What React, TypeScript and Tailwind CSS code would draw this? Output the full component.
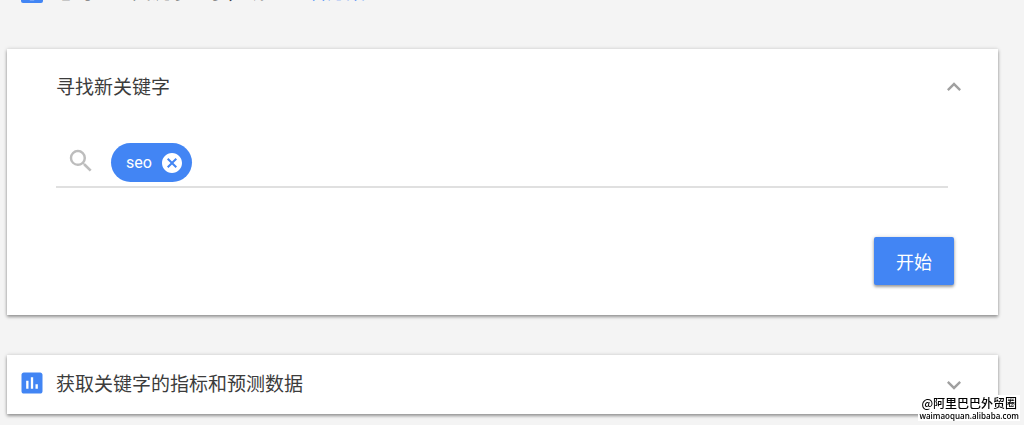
import { MdAssessment, MdCancel, MdKeyboardArrowDown, MdKeyboardArrowUp, MdLightbulb, MdSearch } from 'react-icons/md'

const shadow = 'shadow-[0_2px_3px_rgba(0,0,0,0.35),0_0_4px_rgba(0,0,0,0.15)]'

const PlanNotice = () => {
  return (
    <div className="-mt-[22px] mb-[43px] flex h-7 items-center pl-[11px]">
      <span className="flex size-7 items-center justify-center">
        <span className="flex size-[22px] items-center justify-center rounded-xs bg-[#4285f4] text-white">
          <MdLightbulb className="size-5" />
        </span>
      </span>
      <p className="ml-[10px] pb-px text-[19px]">
        您可以从关键字入手，或
        <a href="#plans" className="ml-6 text-[#4285f4]">
          查看方案
        </a>
      </p>
    </div>
  )
}

const FindKeywords = () => {
  return (
    <section className={`bg-white pr-11 pl-[49px] ${shadow}`}>
      <div className="flex h-[75px] items-center justify-between">
        <h2 className="text-[19px]">寻找新关键字</h2>
        <button type="button" aria-label="收起" className="-mr-[14px] text-[#a0a0a0]">
          <MdKeyboardArrowUp className="size-7 stroke-current" />
        </button>
      </div>
      <div className="mr-[6px] flex h-16 items-end border-b-2 border-[#e0e0e0] pb-1 pl-[10px]">
        <MdSearch className="mb-[6px] size-[30px] text-[#bdbdbd]" />
        <span className="ml-[15px] flex h-[39px] items-center rounded-full bg-[#4285f4] pr-2 pl-[15px] text-white">
          <span className="font-[Roboto] text-base">seo</span>
          <button type="button" aria-label="移除 seo" className="ml-2">
            <MdCancel className="size-6" />
          </button>
        </span>
        <input aria-label="关键字" className="ml-2 h-10 min-w-0 flex-1 outline-none" />
      </div>
      <div className="flex justify-end pt-[49px] pb-[30px]">
        <button
          type="button"
          className={`h-12 w-20 rounded-xs bg-[#4285f4] text-lg text-white ${shadow}`}
        >
          开始
        </button>
      </div>
    </section>
  )
}

const Forecasts = () => {
  return (
    <section className={`mt-10 flex h-[59px] items-center bg-white pr-[30px] pl-[11px] ${shadow}`}>
      <div className="flex flex-1 items-center pb-1">
        <MdAssessment className="size-7 text-[#4285f4]" />
        <h2 className="ml-[10px] text-[19px] leading-7">获取关键字的指标和预测数据</h2>
      </div>
      <button type="button" aria-label="展开" className="text-[#a0a0a0]">
        <MdKeyboardArrowDown className="size-7 stroke-current" />
      </button>
    </section>
  )
}

const App = () => {
  return (
    <main className="min-h-screen overflow-hidden bg-[#f4f4f4] pr-[26px] pl-[7px] font-['Noto_Sans_CJK_SC',sans-serif] text-[#3c3c3c]">
      <PlanNotice />
      <FindKeywords />
      <Forecasts />
      <p className="fixed right-1 bottom-1 bg-white px-px text-center text-black">
        <span className="block text-[12px] leading-4 font-medium">@阿里巴巴外贸圈</span>
        <span className="block font-['Open_Sans'] text-[8px] leading-[10px] font-semibold">
          waimaoquan.alibaba.com
        </span>
      </p>
    </main>
  )
}

export default App
